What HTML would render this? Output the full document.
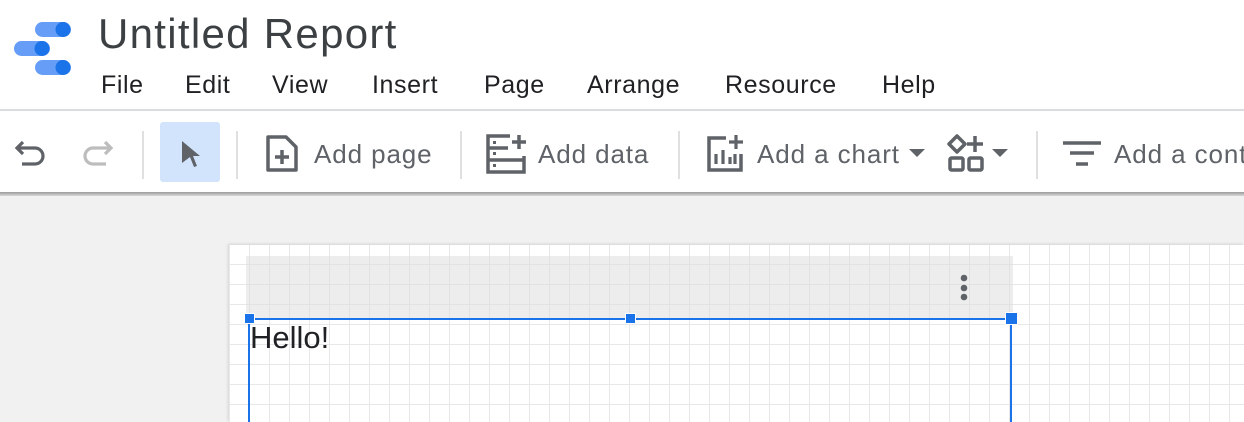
<!DOCTYPE html>
<html><head><meta charset="utf-8"><style>
*{margin:0;padding:0;box-sizing:border-box}
body{width:1244px;height:422px;overflow:hidden;position:relative;background:#fff;font-family:"Liberation Sans",Roboto,sans-serif;white-space:nowrap}
.abs{position:absolute}
.title{left:98px;top:10px;font-size:42px;color:#3c4043;letter-spacing:1.3px}
.menu span{position:absolute;top:71px;font-size:25px;color:#202124;letter-spacing:0.6px}
.hline{left:0;top:109px;width:1244px;height:2px;background:#dadce0}
.tb{left:0;top:111px;width:1244px;height:82px;background:#fff}
.shadow{left:0;top:192px;width:1244px;height:4px;background:linear-gradient(#9a9a9a,#d8d8d8)}
.canvasbg{left:0;top:196px;width:1244px;height:226px;background:#f1f1f1}
.sep{position:absolute;top:131px;width:2px;height:48px;background:#e0e0e0}
.lbl{position:absolute;top:139px;font-size:26px;color:#5f6368;letter-spacing:0.9px}
.page{left:229px;top:245px;width:1015px;height:177px;background-color:#fff;
background-image:linear-gradient(90deg,#e8e8e8 1px,transparent 1px),linear-gradient(#e8e8e8 1px,transparent 1px);
background-size:20px 20px;background-position:0px 19px;box-shadow:-1px -1px 3px rgba(0,0,0,.12)}
.gray{left:246px;top:256px;width:767px;height:62px;background:rgba(220,220,220,.5)}
.bl{background:#1a73e8}
.h{position:absolute;width:11px;height:11px;background:#1a73e8;border:1px solid #fff}
</style></head><body>
<svg class="abs" style="left:12px;top:20px" width="60" height="56" viewBox="0 0 60 56">
<rect x="23" y="2" width="36" height="15" rx="7.5" fill="#669df6"/><circle cx="51" cy="9.5" r="7.5" fill="#1a73e8"/>
<rect x="2" y="21" width="36" height="15" rx="7.5" fill="#669df6"/><circle cx="30" cy="28.5" r="7.5" fill="#1a73e8"/>
<rect x="23" y="40" width="36" height="15" rx="7.5" fill="#669df6"/><circle cx="51" cy="47.5" r="7.5" fill="#1a73e8"/>
</svg>
<div class="abs title">Untitled Report</div>
<div class="menu"><span style="left:101px">File</span><span style="left:185px">Edit</span><span style="left:272px">View</span><span style="left:372px">Insert</span><span style="left:484px">Page</span><span style="left:587px">Arrange</span><span style="left:725px">Resource</span><span style="left:882px">Help</span></div>
<div class="abs hline"></div>
<div class="abs tb"></div>
<div class="abs shadow"></div>
<div class="abs canvasbg"></div>
<svg class="abs" style="left:14px;top:138px" width="36" height="34" viewBox="0 0 36 34"><path d="M9 4 L3 10 L9 16 M3 10 H21 a8 8 0 0 1 0 16 H8" fill="none" stroke="#5f6368" stroke-width="3.2"/></svg>
<svg class="abs" style="left:78px;top:138px" width="36" height="34" viewBox="0 0 36 34"><path d="M27 4 L33 10 L27 16 M33 10 H15 a8 8 0 0 0 0 16 H28" fill="none" stroke="#bdbdbd" stroke-width="3.2"/></svg>
<div class="sep" style="left:142px"></div>
<div class="abs" style="left:160px;top:122px;width:60px;height:60px;background:#d2e3fc;border-radius:3px"></div>
<svg class="abs" style="left:180px;top:140px" width="24" height="30" viewBox="0 0 24 30"><path d="M2 1 L20 16 L13 16 L17 26 L14 27 L10 17 L2 23 Z" fill="#5f6368"/></svg>
<div class="sep" style="left:236px"></div>
<svg class="abs" style="left:265px;top:134px" width="34" height="40" viewBox="0 0 34 40"><path d="M3 3 H21 L31 13 V36 H3 Z" fill="none" stroke="#5f6368" stroke-width="3.5" stroke-linejoin="round"/><path d="M17 16 V30 M10 23 H24" stroke="#5f6368" stroke-width="3.5"/></svg>
<div class="lbl" style="left:314px">Add page</div>
<div class="sep" style="left:460px"></div>
<svg class="abs" style="left:484px;top:132px" width="44" height="44" viewBox="0 0 44 44"><path d="M26 4 H4 V40 H40 V24 M4 16 H24 M4 28 H40" fill="none" stroke="#5f6368" stroke-width="3.5"/><path d="M35 3 V17 M28 10 H42" stroke="#5f6368" stroke-width="3.5"/><rect x="9" y="9" width="3" height="3" fill="#5f6368"/><rect x="9" y="20" width="3" height="3" fill="#5f6368"/><rect x="9" y="32" width="3" height="3" fill="#5f6368"/></svg>
<div class="lbl" style="left:538px">Add data</div>
<div class="sep" style="left:678px"></div>
<svg class="abs" style="left:704px;top:132px" width="42" height="42" viewBox="0 0 42 42"><path d="M22 6 H5 V38 H37 V22" fill="none" stroke="#5f6368" stroke-width="3.5"/><path d="M32 3 V17 M25 10 H39 M12 22 V32 M19 18 V32 M26 25 V32 M31 22 V32" stroke="#5f6368" stroke-width="3.2"/></svg>
<div class="lbl" style="left:757px">Add a chart</div>
<svg class="abs" style="left:908px;top:148px" width="18" height="10"><path d="M1 1 H17 L9 9 Z" fill="#5f6368"/></svg>
<svg class="abs" style="left:946px;top:134px" width="40" height="40" viewBox="0 0 40 40"><path d="M11 2 L19 10 L11 18 L3 10 Z" fill="none" stroke="#5f6368" stroke-width="3.5" stroke-linejoin="round"/><path d="M29 2 V18 M21 10 H37" stroke="#5f6368" stroke-width="3.5"/><rect x="4" y="24" width="13" height="12" rx="1.5" fill="none" stroke="#5f6368" stroke-width="3.5"/><rect x="23" y="24" width="13" height="12" rx="1.5" fill="none" stroke="#5f6368" stroke-width="3.5"/></svg>
<svg class="abs" style="left:991px;top:148px" width="18" height="10"><path d="M1 1 H17 L9 9 Z" fill="#5f6368"/></svg>
<div class="sep" style="left:1036px"></div>
<svg class="abs" style="left:1062px;top:140px" width="40" height="28" viewBox="0 0 40 28"><path d="M1 3 H39 M8 13 H32 M14 24 H26" stroke="#5f6368" stroke-width="3.5"/></svg>
<div class="lbl" style="left:1114px">Add a cont</div>
<div class="abs page"></div>
<div class="abs gray"></div>
<svg class="abs" style="left:958px;top:274px" width="12" height="28"><circle cx="6" cy="4" r="3.3" fill="#5f6368"/><circle cx="6" cy="14" r="3.3" fill="#5f6368"/><circle cx="6" cy="23" r="3.3" fill="#5f6368"/></svg>
<div class="abs bl" style="left:250px;top:318px;width:762px;height:2px"></div>
<div class="abs bl" style="left:248px;top:319px;width:2px;height:103px"></div>
<div class="abs bl" style="left:1010px;top:319px;width:2px;height:103px"></div>
<div class="h" style="left:244px;top:313px"></div>
<div class="h" style="left:625px;top:313px"></div>
<div class="h" style="left:1005px;top:312px;width:13px;height:13px"></div>
<div class="abs" style="left:250px;top:320px;font-size:31px;color:#202124">Hello!</div>
</body></html>
